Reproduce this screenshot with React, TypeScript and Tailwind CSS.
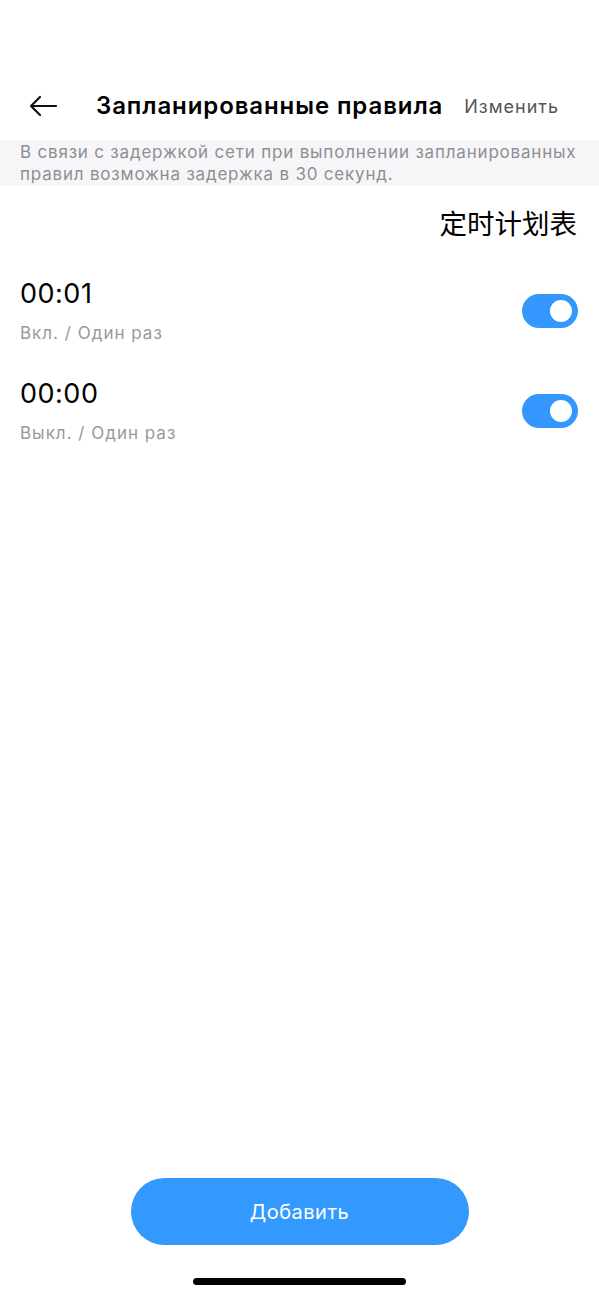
import { useState } from 'react';

interface Rule {
  id: number;
  time: string;
  label: string;
  enabled: boolean;
}

const initialRules: Rule[] = [
  { id: 1, time: '00:01', label: 'Вкл. / Один раз', enabled: true },
  { id: 2, time: '00:00', label: 'Выкл. / Один раз', enabled: true },
];

function Toggle({ on, onClick }: { on: boolean; onClick: () => void }) {
  return (
    <button
      onClick={onClick}
      className={`flex items-center w-[56px] h-[34px] rounded-full px-[6px] ${
        on ? 'bg-[#3497fd] justify-end' : 'bg-[#e5e5ea] justify-start'
      }`}
    >
      <span className="w-[22px] h-[22px] rounded-full bg-white" />
    </button>
  );
}

export default function App() {
  const [rules, setRules] = useState(initialRules);

  const toggle = (id: number) =>
    setRules(rs => rs.map(r => (r.id === id ? { ...r, enabled: !r.enabled } : r)));

  return (
    <div
      className="bg-white min-h-[1298px] w-full flex flex-col text-black"
      style={{ fontFamily: 'Inter, "Noto Sans CJK SC", sans-serif' }}
    >
      {/* Header */}
      <div className="h-[140px] flex items-end pb-[14px] pl-[28px] pr-[40px]">
        <div className="flex items-center w-full h-[40px]">
          <svg width="30" height="22" viewBox="0 0 30 22" fill="none" className="shrink-0">
            <path d="M28 11H3M12 2L3 11l9 9" stroke="#111" strokeWidth="2.2" strokeLinecap="round" strokeLinejoin="round" />
          </svg>
          <h1 className="ml-[38px] text-[24px] font-semibold tracking-[0.9px] whitespace-nowrap">
            Запланированные правила
          </h1>
          <span className="ml-auto text-[18px] tracking-[1px] text-[#555] whitespace-nowrap">Изменить</span>
        </div>
      </div>

      {/* Notice */}
      <div className="bg-[#f6f6f8] pl-[20px] pr-[14px] py-[1px] text-[17px] tracking-[0.8px] leading-[22px] text-[#8e8e93]">
        В связи с задержкой сети при выполнении запланированных правил возможна задержка в 30 секунд.
      </div>

      {/* Section title */}
      <div className="flex justify-end pr-[22px] pt-[20px] text-[27.5px] leading-[36px]">定时计划表</div>

      {/* Rules */}
      <div className="flex flex-col pt-[19px]">
        {rules.map(rule => (
          <div key={rule.id} className="flex items-center justify-between pl-[20px] pr-[21px] h-[100px]">
            <div className="flex flex-col">
              <span className="text-[27px] tracking-[0.5px] leading-[32px]">{rule.time}</span>
              <span className="mt-[12px] text-[17px] tracking-[1px] leading-[22px] text-[#999]">{rule.label}</span>
            </div>
            <Toggle on={rule.enabled} onClick={() => toggle(rule.id)} />
          </div>
        ))}
      </div>

      <div className="flex-1" />

      {/* Bottom action */}
      <div className="flex flex-col items-center pb-[13px]">
        <button className="w-[338px] h-[67px] rounded-full bg-[#3399ff] text-white text-[20px] tracking-[0.5px]">
          Добавить
        </button>
        <div className="mt-[33px] w-[213px] h-[7px] rounded-full bg-black" />
      </div>
    </div>
  );
}
